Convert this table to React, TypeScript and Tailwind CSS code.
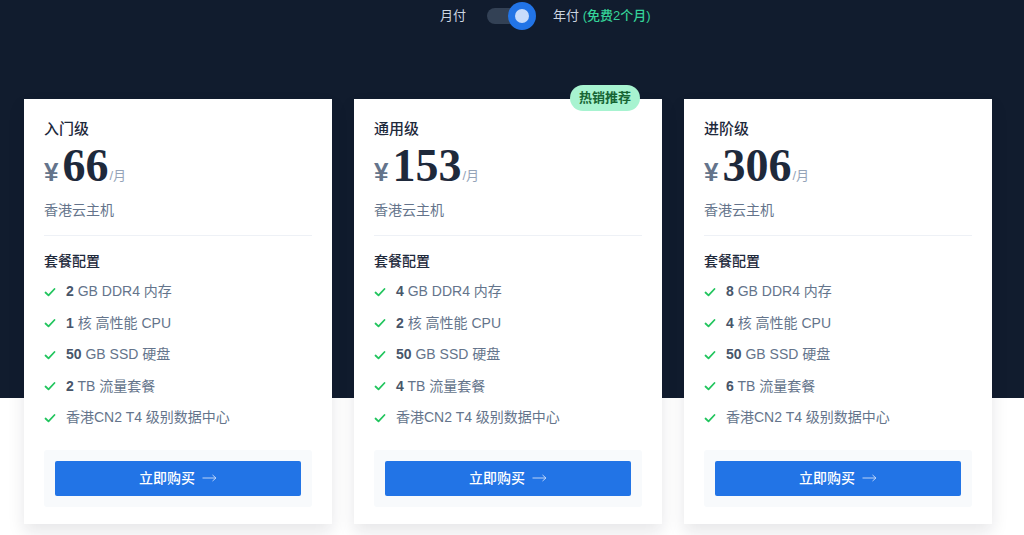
import React from "react";

const plans = [
  { name: "入门级", price: "66", mem: "2", cpu: "1", disk: "50", traffic: "2", hot: false },
  { name: "通用级", price: "153", mem: "4", cpu: "2", disk: "50", traffic: "4", hot: true },
  { name: "进阶级", price: "306", mem: "8", cpu: "4", disk: "50", traffic: "6", hot: false },
];

const sans = { fontFamily: '"Liberation Sans", "Noto Sans CJK SC", sans-serif' };

function Check() {
  return (
    <svg width="12" height="12" viewBox="0 0 12 12" className="shrink-0">
      <path d="M1.5 6.5 L4.5 9.3 L10.5 3" fill="none" stroke="#22c55e" strokeWidth="1.8" strokeLinecap="round" strokeLinejoin="round" />
    </svg>
  );
}

function Item({ b, rest }: { b?: string; rest: string }) {
  return (
    <li className="flex items-center h-[31.5px] text-[14px] text-[#64748b]">
      <span className="mr-[10px]"><Check /></span>
      <span>
        {b && <b className="font-bold text-[#475569]">{b}</b>}
        {b ? " " : ""}
        {rest}
      </span>
    </li>
  );
}

function Card({ p }: { p: (typeof plans)[number] }) {
  return (
    <div className="relative w-[308px] bg-white shadow-[0_8px_16px_rgba(15,23,42,0.10)] px-[20px] pt-[19px] pb-[17px]">
      {p.hot && (
        <div className="absolute -top-[14px] right-[22px] h-[26px] px-[9px] rounded-full bg-[#a7f3d0] text-[#166534] text-[13px] font-semibold flex items-center">
          热销推荐
        </div>
      )}
      <div className="text-[15px] font-medium text-[#1e293b] leading-[22px]">{p.name}</div>
      <div className="flex items-end h-[50px] mt-[2px]">
        <span className="text-[26px] text-[#64748b] leading-none mb-[7px] font-semibold mr-[4px]">¥</span>
        <span
          className="text-[46px] font-bold text-[#1e293b] leading-none mb-[3px]"
          style={{ fontFamily: '"Liberation Serif", serif', fontVariantNumeric: "oldstyle-nums" }}
        >
          {p.price}
        </span>
        <span className="text-[13px] text-[#94a3b8] mb-[7px] ml-[1px]">/月</span>
      </div>
      <div className="text-[14px] text-[#64748b] mt-[8px] leading-[20px]">香港云主机</div>
      <div className="h-px bg-[#eef1f6] mt-[15px]" />
      <div className="text-[14px] font-medium text-[#1e293b] mt-[15px] leading-[20px]">套餐配置</div>
      <ul className="mt-[5px]">
        <Item b={p.mem} rest="GB DDR4 内存" />
        <Item b={p.cpu} rest="核 高性能 CPU" />
        <Item b={p.disk} rest="GB SSD 硬盘" />
        <Item b={p.traffic} rest="TB 流量套餐" />
        <Item rest="香港CN2 T4 级别数据中心" />
      </ul>
      <div className="mt-[16px] bg-[#f8fafc] rounded-[3px] px-[11px] py-[11px]">
        <button className="w-full h-[35px] bg-[#2274e6] rounded-[2px] text-white text-[14px] font-medium flex items-center justify-center gap-[7px]">
          <span>立即购买</span>
          <svg width="15" height="8" viewBox="0 0 15 8">
            <path d="M0.5 4 H14 M10.5 1 L14 4 L10.5 7" fill="none" stroke="#bcd3f7" strokeWidth="1" />
          </svg>
        </button>
      </div>
    </div>
  );
}

export default function App() {
  return (
    <div className="w-[1024px] h-[535px] relative overflow-hidden bg-white" style={sans}>
      <div className="absolute inset-x-0 top-0 h-[398px] bg-[#111c2e]" />
      <div className="relative">
        <div className="flex items-center h-[32px] text-[13px] pl-[440px]">
          <span className="text-[#cbd5e1] mr-[21px]">月付</span>
          <div className="relative w-[43px] h-[16px] rounded-full bg-[#334155] mr-[23px]">
            <div className="absolute right-[-6px] top-[-6px] w-[28px] h-[28px] rounded-full bg-[#2274e6] flex items-center justify-center">
              <div className="w-[14px] h-[14px] rounded-full bg-[#c7dbfb]" />
            </div>
          </div>
          <span className="text-[#cbd5e1]">年付 <span className="text-[#34d399] font-medium">(免费2个月)</span></span>
        </div>
        <div className="flex gap-[22px] pl-[24px] mt-[67px]">
          {plans.map((p) => (
            <Card key={p.name} p={p} />
          ))}
        </div>
      </div>
    </div>
  );
}
